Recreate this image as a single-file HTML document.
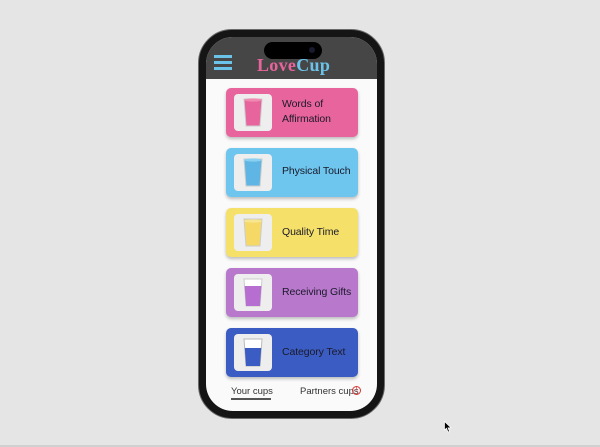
<!DOCTYPE html>
<html><head><meta charset="utf-8"><style>
*{margin:0;padding:0;box-sizing:border-box}
html,body{width:600px;height:447px;overflow:hidden;background:#e6e5e6;font-family:"Liberation Sans",sans-serif}
.bottom{position:absolute;left:0;top:445px;width:600px;height:2px;background:#d0d0d0}
.phone{position:absolute;left:198px;top:29px;width:187px;height:390px;background:#151515;border-radius:34px;border:1.5px solid #6a6a6a}
.screen{position:absolute;left:206px;top:37px;width:171px;height:374px;background:#fafafa;border-radius:27px;overflow:hidden}
.header{position:absolute;left:0;top:0;width:171px;height:42px;background:#464646}
.island{position:absolute;left:264px;top:42px;width:58px;height:17px;background:#000;border-radius:9px}
.cam{position:absolute;left:309px;top:47px;width:6px;height:6px;border-radius:50%;background:#1a1a2e}
.ham{position:absolute;left:214px;width:18px;height:2.5px;background:#6bc3ea}
.logo{position:absolute;left:257px;top:55px;font-family:"Liberation Serif",serif;font-size:18px;font-weight:bold;letter-spacing:.3px}
.card{position:absolute;left:226px;width:132px;height:49px;border-radius:5px;box-shadow:0 2px 3px rgba(0,0,0,.25)}
.ib{position:absolute;left:8px;top:6px;width:38px;height:37px;background:#eeeeee;border-radius:4px}
.ib svg{position:absolute;left:9px;top:3px}
.t{position:absolute;left:56px;font-size:10.5px;color:#1a1a2a;line-height:15px;letter-spacing:-0.1px}
.tab{position:absolute;top:386px;font-size:9.5px;color:#333}
</style></head><body>
<div class="phone"></div>
<div class="screen"><div class="header"></div></div>
<div class="island"></div><div class="cam"></div>
<div class="ham" style="top:55px"></div><div class="ham" style="top:61px"></div><div class="ham" style="top:67px"></div>
<div class="logo"><span style="color:#e8649c">Love</span><span style="color:#6bc3ea">Cup</span></div>

<div class="card" style="top:88px;background:#e8649c"><div class="ib"><svg width="20" height="31" viewBox="0 0 20 31"><path d="M1 2 L19 2 L17 29 L3 29 Z" fill="#e8649c" stroke="#ccc" stroke-width="1"/><ellipse cx="10" cy="3" rx="9" ry="1.6" fill="#f08ab0"/></svg></div><div class="t" style="top:9px">Words of<br>Affirmation</div></div>

<div class="card" style="top:148px;background:#6ec6ee"><div class="ib"><svg width="20" height="31" viewBox="0 0 20 31"><path d="M1 2 L19 2 L17 29 L3 29 Z" fill="#5fb6e4" stroke="#ccc" stroke-width="1"/><ellipse cx="10" cy="3" rx="9" ry="1.6" fill="#8ad0f0"/></svg></div><div class="t" style="top:16px">Physical Touch</div></div>

<div class="card" style="top:208px;background:#f5e06a"><div class="ib"><svg width="20" height="31" viewBox="0 0 20 31"><path d="M1 2 L19 2 L17 29 L3 29 Z" fill="#f5d866" stroke="#ccc" stroke-width="1"/><ellipse cx="10" cy="4" rx="9" ry="1.6" fill="#f8e590"/></svg></div><div class="t" style="top:17px">Quality Time</div></div>

<div class="card" style="top:268px;background:#b878cc"><div class="ib"><svg width="20" height="31" viewBox="0 0 20 31"><path d="M1 2 L19 2 L17 29 L3 29 Z" fill="#fff" stroke="#ccc" stroke-width="1"/><path d="M1.6 9 L18.4 9 L17 29 L3 29 Z" fill="#b66fd0"/></svg></div><div class="t" style="top:17px">Receiving Gifts</div></div>

<div class="card" style="top:328px;background:#3b5cc2"><div class="ib"><svg width="20" height="31" viewBox="0 0 20 31"><path d="M1 2 L19 2 L17 29 L3 29 Z" fill="#fff" stroke="#bbb" stroke-width="1"/><path d="M1.8 11 L18.2 11 L17 29 L3 29 Z" fill="#3b5cc2"/></svg></div><div class="t" style="top:17px">Category Text</div></div>

<div class="tab" style="left:231px">Your cups</div>
<div style="position:absolute;left:231px;top:398px;width:40px;height:1.5px;background:#555"></div>
<div class="tab" style="left:300px">Partners cups</div>
<div style="position:absolute;left:352px;top:386px;width:9px;height:9px;border:1px solid #d33;border-radius:50%;color:#d33;font-size:7px;line-height:7px;text-align:center">!</div>
<div class="bottom"></div>
<svg style="position:absolute;left:444px;top:421px" width="8" height="12" viewBox="0 0 8 12"><path d="M0.5 0.5 L0.5 9 L2.5 7.2 L4 11 L5.5 10.4 L4 6.8 L7 6.8 Z" fill="#000" stroke="#fff" stroke-width="0.7"/></svg>
</body></html>
